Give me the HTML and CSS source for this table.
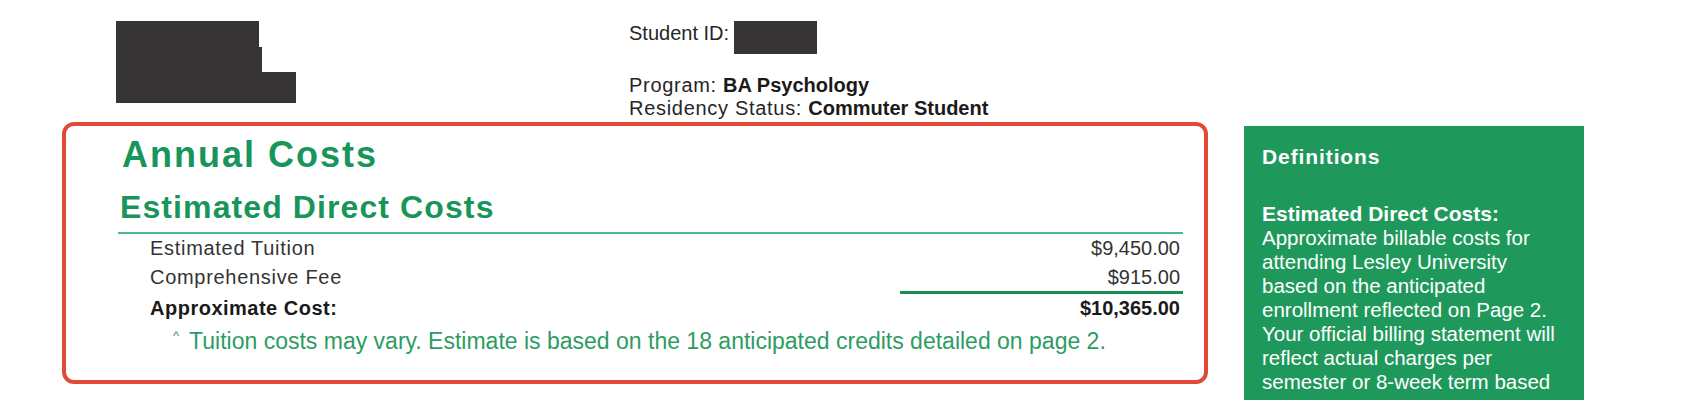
FILE: index.html
```html
<!DOCTYPE html>
<html lang="en">
<head>
<meta charset="utf-8">
<title>Annual Costs</title>
<link rel="stylesheet" href="styles.css">
</head>
<body>
<div class="page">
  <header class="header">
    <svg class="logo" width="180" height="82" viewBox="0 0 180 82" aria-hidden="true">
      <polygon points="0,0 143,0 143,26 146,26 146,51 180,51 180,82 0,82" fill="#363435"/>
    </svg>
    <div class="info">
      <div class="info-id">
        <span class="info-line">Student ID:</span>
        <span class="redact"></span>
      </div>
      <div class="info-line info-program">Program: <b>BA Psychology</b></div>
      <div class="info-line">Residency Status: <b>Commuter Student</b></div>
    </div>
  </header>
  <main class="main">
    <section class="costs">
      <h1 class="costs-title">Annual Costs</h1>
      <h2 class="costs-sub">Estimated Direct Costs</h2>
      <div class="table">
        <div class="row">
          <span class="label">Estimated Tuition</span>
          <span class="amount">$9,450.00</span>
        </div>
        <div class="row row-sub">
          <span class="label">Comprehensive Fee</span>
          <span class="amount amount-rule">$915.00</span>
        </div>
        <div class="row row-total">
          <span class="label">Approximate Cost:</span>
          <span class="amount">$10,365.00</span>
        </div>
      </div>
      <p class="note"><span class="caret">^</span>Tuition costs may vary. Estimate is based on the 18 anticipated credits detailed on page 2.</p>
    </section>
    <aside class="defs">
      <h3 class="defs-title">Definitions</h3>
      <h4 class="defs-term">Estimated Direct Costs:</h4>
      <p class="defs-text">Approximate billable costs for attending Lesley University based on the anticipated enrollment reflected on Page 2. Your official billing statement will reflect actual charges per semester or 8-week term based</p>
    </aside>
  </main>
</div>
</body>
</html>
```

FILE: styles.css
```css
html, body {
  margin: 0;
  padding: 0;
  background: #ffffff;
}

body {
  width: 1687px;
  height: 400px;
  overflow: hidden;
  font-family: "Liberation Sans", Arial, Helvetica, sans-serif;
  color: #2b2b2b;
}

.page {
  display: flex;
  flex-direction: column;
}

/* Header */
.header {
  display: flex;
  align-items: flex-start;
  padding-top: 21px;
}

.logo {
  display: block;
  margin-left: 116px;
  flex: none;
}

.info {
  margin-left: 333px;
  display: flex;
  flex-direction: column;
  font-size: 20px;
  letter-spacing: 0.7px;
  color: #262626;
}

.info-id {
  display: flex;
  align-items: flex-start;
  gap: 5px;
}

.info-id .info-line {
  line-height: 24px;
  letter-spacing: 0;
}

.redact {
  display: block;
  width: 83px;
  height: 33px;
  background: #363435;
}

.info-line {
  line-height: 23px;
}

.info-line b {
  font-weight: 700;
  letter-spacing: 0;
  color: #1a1a1a;
}

.info-program {
  margin-top: 20px;
}

/* Main row */
.main {
  display: flex;
  align-items: flex-start;
  margin-top: 2px;
  padding-left: 62px;
  gap: 36px;
}

.costs {
  box-sizing: border-box;
  width: 1146px;
  height: 262px;
  border: 4px solid #e04a36;
  border-radius: 12px;
  padding: 9px 21px 0 52px;
}

.costs-title {
  margin: 0;
  padding-left: 4px;
  font-size: 36px;
  line-height: 40px;
  font-weight: 700;
  letter-spacing: 2px;
  color: #17955a;
}

.costs-sub {
  margin: 12px 0 0;
  padding-left: 2px;
  font-size: 32px;
  line-height: 40px;
  font-weight: 700;
  letter-spacing: 1.1px;
  color: #17955a;
}

.table {
  margin-top: 5px;
  border-top: 2px solid #52b788;
  font-size: 20px;
  color: #333333;
}

.row {
  display: flex;
  justify-content: space-between;
  align-items: flex-end;
  padding: 0 3px 0 32px;
  line-height: 29px;
}

.label {
  letter-spacing: 0.7px;
}

.row-sub {
  line-height: 28px;
}

.amount-rule {
  box-sizing: border-box;
  width: 283px;
  margin-right: -3px;
  padding-right: 3px;
  text-align: right;
  border-bottom: 3px solid #178f52;
}

.row-sub .label {
  padding-bottom: 3px;
}

.row-total {
  font-weight: 700;
  color: #1a1a1a;
}

.row-total .label {
  letter-spacing: 0.5px;
}

.note {
  margin: 2px 0 0;
  padding-left: 55px;
  font-size: 23px;
  line-height: 32px;
  color: #2d9c63;
}

.caret {
  display: inline-block;
  font-size: 13px;
  line-height: 13px;
  vertical-align: 9px;
  margin-right: 10px;
}

/* Definitions sidebar */
.defs {
  box-sizing: border-box;
  width: 340px;
  height: 274px;
  margin-top: 4px;
  background: #1f995b;
  color: #ffffff;
  padding: 17px 16px 0 18px;
}

.defs-title {
  margin: 0;
  font-size: 21px;
  line-height: 28px;
  font-weight: 700;
  letter-spacing: 0.9px;
}

.defs-term {
  margin: 31px 0 0;
  font-size: 21px;
  line-height: 24px;
  font-weight: 700;
}

.defs-text {
  margin: 0;
  font-size: 20.5px;
  line-height: 24px;
}
```
